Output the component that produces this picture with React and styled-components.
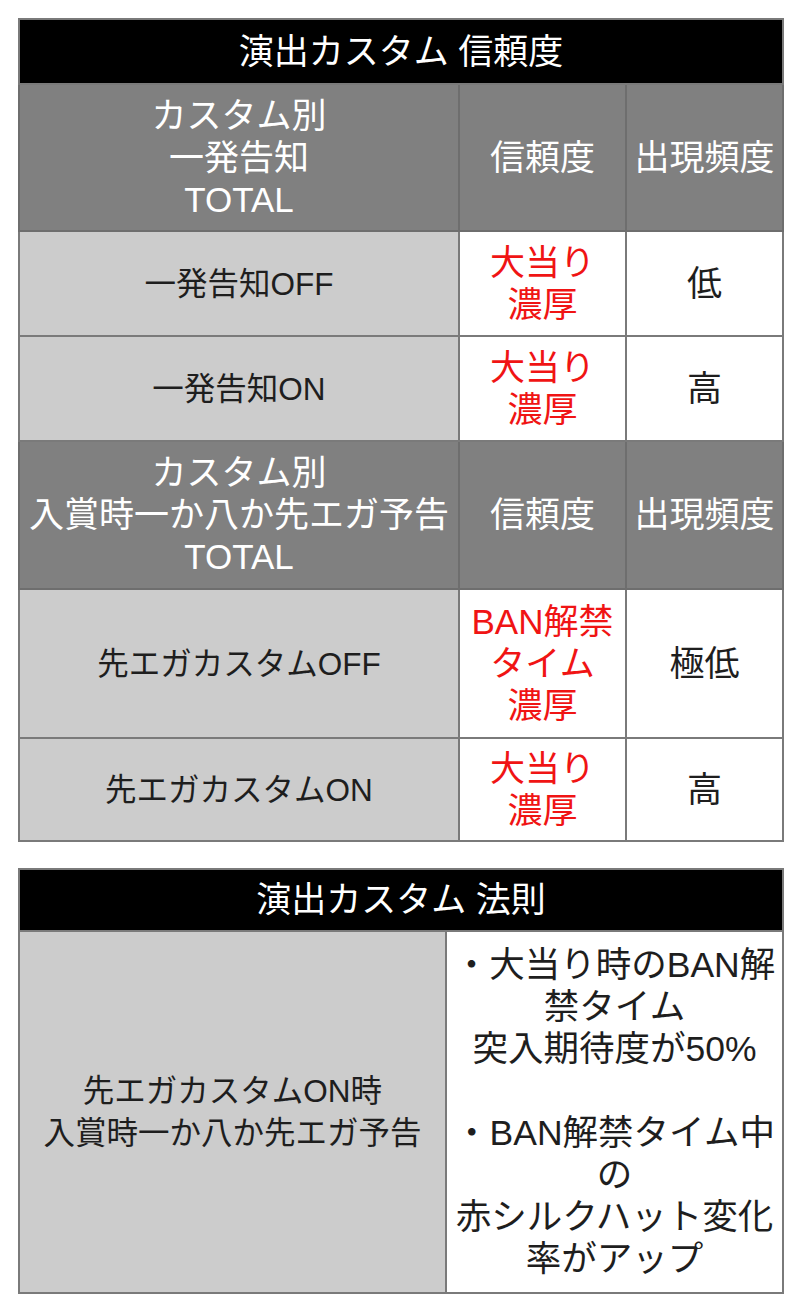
import styled, { createGlobalStyle } from 'styled-components';

const GlobalStyle = createGlobalStyle`
  html, body {
    margin: 0;
    padding: 0;
    background: #ffffff;
  }
  body {
    font-family: "Liberation Sans", "Noto Sans CJK JP", sans-serif;
  }
`;

const Page = styled.div`
  padding: 18px 18px 20px 18px;
  display: flex;
  flex-direction: column;
  gap: 26px;
`;

const Table = styled.table`
  width: 764px;
  border-collapse: collapse;
  table-layout: fixed;
  border: 2px solid #7a7a7a;
`;

const Row = styled.tr`
  height: ${({ $h }) => $h}px;
`;

const TitleCell = styled.th`
  background: #000000;
  color: #ffffff;
  font-weight: 400;
  font-size: 35px;
  line-height: 42px;
  padding: 0;
  border: 2px solid #7a7a7a;
  text-align: center;
`;

const HeadCell = styled.th`
  background: #808080;
  color: #ffffff;
  font-weight: 400;
  font-size: 35px;
  line-height: 42px;
  padding: 0;
  border: 2px solid #6e6e6e;
  text-align: center;
  white-space: nowrap;
`;

const LabelCell = styled.td`
  background: #cccccc;
  color: #1e1e1e;
  font-size: 31.5px;
  line-height: 42px;
  padding: 0;
  border: 2px solid #7a7a7a;
  text-align: center;
  white-space: nowrap;
`;

const ValueCell = styled.td`
  background: #ffffff;
  color: ${({ $red }) => ($red ? '#f01414' : '#1e1e1e')};
  font-size: ${({ $size }) => $size || 35}px;
  line-height: 42px;
  padding: 0;
  border: 2px solid #7a7a7a;
  text-align: center;
  white-space: nowrap;
`;

const Lines = ({ items }) =>
  items.map((t, i) => (
    <div key={i}>{t === '' ? '\u00a0' : t}</div>
  ));

const rows1 = [
  { label: '一発告知OFF', rate: ['大当り', '濃厚'], freq: '低', h: 105 },
  { label: '一発告知ON', rate: ['大当り', '濃厚'], freq: '高', h: 105 },
];

const rows2 = [
  { label: '先エガカスタムOFF', rate: ['BAN解禁', 'タイム', '濃厚'], freq: '極低', h: 149 },
  { label: '先エガカスタムON', rate: ['大当り', '濃厚'], freq: '高', h: 103 },
];

const Header = ({ title, h }) => (
  <Row $h={h}>
    <HeadCell>
      <Lines items={title} />
    </HeadCell>
    <HeadCell>信頼度</HeadCell>
    <HeadCell>出現頻度</HeadCell>
  </Row>
);

const Body = ({ rows }) =>
  rows.map((r) => (
    <Row key={r.label} $h={r.h}>
      <LabelCell>{r.label}</LabelCell>
      <ValueCell $red>
        <Lines items={r.rate} />
      </ValueCell>
      <ValueCell>{r.freq}</ValueCell>
    </Row>
  ));

const ruleLines = [
  '・大当り時のBAN解',
  '禁タイム',
  '突入期待度が50%',
  '',
  '・BAN解禁タイム中',
  'の',
  '赤シルクハット変化',
  '率がアップ',
];

export default function App() {
  return (
    <>
      <GlobalStyle />
      <Page>
        <Table>
          <colgroup>
            <col style={{ width: 440 }} />
            <col style={{ width: 167 }} />
            <col style={{ width: 157 }} />
          </colgroup>
          <thead>
            <Row $h={65}>
              <TitleCell colSpan={3}>演出カスタム 信頼度</TitleCell>
            </Row>
          </thead>
          <tbody>
            <Header title={['カスタム別', '一発告知', 'TOTAL']} h={147} />
            <Body rows={rows1} />
            <Header title={['カスタム別', '入賞時一か八か先エガ予告', 'TOTAL']} h={148} />
            <Body rows={rows2} />
          </tbody>
        </Table>

        <Table>
          <colgroup>
            <col style={{ width: 427 }} />
            <col style={{ width: 337 }} />
          </colgroup>
          <thead>
            <Row $h={62}>
              <TitleCell colSpan={2}>演出カスタム 法則</TitleCell>
            </Row>
          </thead>
          <tbody>
            <Row $h={362}>
              <LabelCell>
                <Lines items={['先エガカスタムON時', '入賞時一か八か先エガ予告']} />
              </LabelCell>
              <ValueCell $size={35.5}>
                <Lines items={ruleLines} />
              </ValueCell>
            </Row>
          </tbody>
        </Table>
      </Page>
    </>
  );
}
